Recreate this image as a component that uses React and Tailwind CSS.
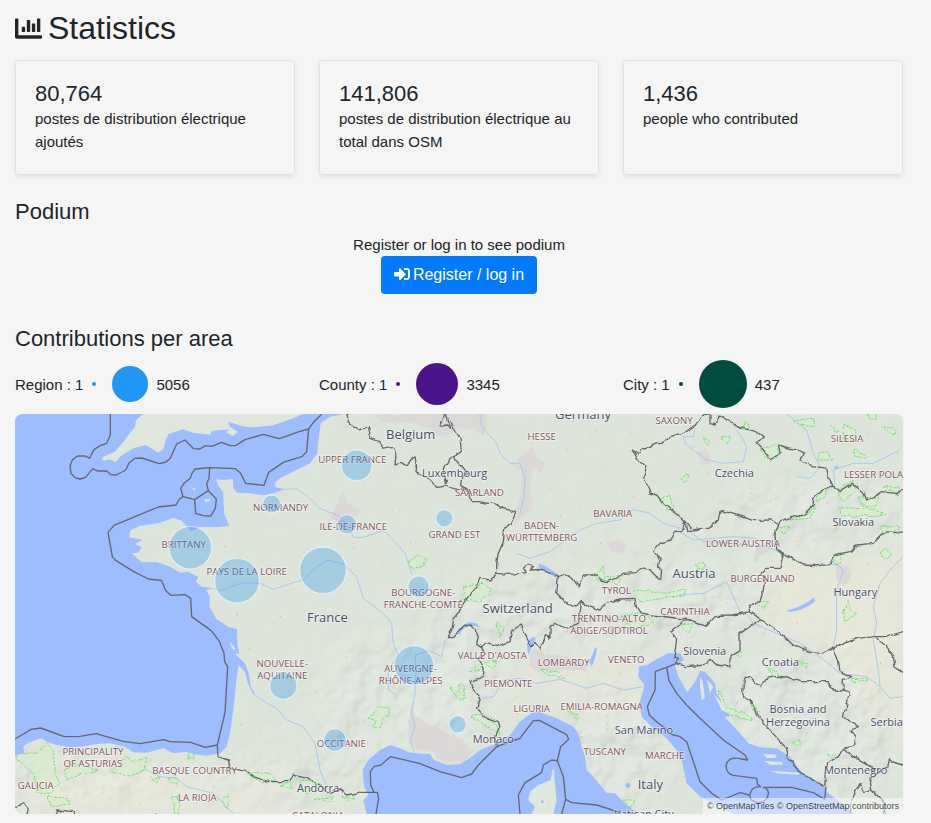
import React from 'react';
import { FaChartBar, FaSignInAlt } from 'react-icons/fa';

const STATS = [
  { value: '80,764', label: 'postes de distribution électrique ajoutés' },
  { value: '141,806', label: 'postes de distribution électrique au total dans OSM' },
  { value: '1,436', label: 'people who contributed' },
];

const AREAS = [
  { name: 'Region', min: 1, max: 5056, dot: 'bg-[#2196f3]', circle: 'bg-[#2196f3] size-9' },
  { name: 'County', min: 1, max: 3345, dot: 'bg-[#4a148c]', circle: 'bg-[#4a148c] size-[42px]' },
  { name: 'City', min: 1, max: 437, dot: 'bg-[#004d40]', circle: 'bg-[#004d40] size-12' },
];

// Map geometry: 3 units per pixel, y grows to the south
const SEAS = [
  // Atlantic and Channel
  'M45 12H1030L990 20 962 40 956 90 952 130 930 160 890 180 840 205 825 218 827 232 855 238 820 250 790 256 750 250 712 248 700 235 698 207 675 210 648 208 655 228 670 245 672 310 688 348 640 352 600 350 575 362 560 350 545 332 520 324 480 338 420 348 390 362 388 382 410 386 428 390 405 402 425 412 415 428 395 430 425 457 470 456 510 470 540 488 565 486 595 500 588 515 605 530 640 535 618 540 630 560 628 590 650 628 685 650 711 658 712 700 718 730 705 732 718 760 712 790 705 850 700 900 690 970 680 1010 660 1030 620 1037 580 1032 560 1025 520 1030 490 1015 440 1028 400 1027 375 1010 330 1000 290 1002 240 1010 210 1012 170 1005 140 995 125 985 85 998 70 1010 72 1028 45 1038Z',
  // Western Mediterranean
  'M1100 1212L1090 1170 1105 1155 1092 1130 1088 1080 1105 1050 1140 1020 1170 1005 1200 1015 1230 1028 1290 1032 1302 1050 1340 1065 1380 1062 1405 1048 1440 1020 1480 1005 1530 975 1560 935 1595 908 1615 905 1670 925 1720 950 1735 970 1745 1010 1755 1040 1760 1080 1780 1100 1820 1148 1845 1150 1870 1175 1900 1200 1910 1212Z',
  // Adriatic
  'M1980 742L2005 730 2040 730 2052 750 2025 765 2035 800 2062 847 2085 815 2100 783 2115 785 2145 820 2150 850 2170 890 2190 918 2175 922 2220 970 2245 1000 2280 1012 2330 1015 2370 1040 2390 1070 2410 1090 2470 1125 2480 1145 2540 1190 2560 1212H2200L2140 1180 2100 1160 2060 1120 2045 1050 2030 1020 1995 980 1955 950 1925 920 1918 880 1930 840 1933 825 1915 800 1917 768 1940 765Z',
];

const ISLANDS = [
  'M430 12L408 30 405 50 370 95 345 125 305 143 310 152 330 148 347 157 360 140 400 115 437 105 475 128 490 118 497 90 505 72 550 58 580 68 632 74 635 62 700 58 690 50 684 35 735 50 765 52 820 46 880 25 908 12Z',
  'M678 66L695 54 714 66 697 78Z',
  'M612 268L628 266 630 274 616 276Z',
  'M578 235h8v5h-8z',
  'M1658 1078L1652 1110 1615 1125 1590 1145 1585 1170 1605 1190 1595 1212H1660L1670 1170 1665 1120 1662 1080Z',
  'M2100 800L2108 815 2115 865 2105 870 2100 830Z',
  'M2120 808L2140 830 2130 850Z',
  'M2140 850L2165 880 2185 910 2165 900Z',
  'M2290 1032L2330 1034 2325 1044 2300 1044Z',
  'M2290 1052L2345 1056 2350 1064 2310 1064Z',
  'M2310 1082L2400 1088 2395 1094 2330 1090Z',
  'M690 695L706 715 700 722 692 705Z',
];

const LAKES = [
  'M1616 460L1640 470 1680 498 1665 502 1645 490 1618 473Z',
  'M2360 602L2395 590 2430 572 2440 562 2446 572 2430 586 2400 600 2370 606Z',
  'M1374 666L1382 650 1408 636 1430 640 1440 652 1425 648 1400 648 1385 662 1378 676Z',
  'M1580 700L1598 680 1608 684 1595 710 1585 735Z',
  'M1768 755L1785 715 1792 712 1785 745 1775 770Z',
  'M705 732L735 760 746 790 752 830 765 850 758 850 744 820 735 785 712 762Z',
  'M1878 1120L1888 1118 1892 1128 1884 1136 1876 1128Z',
  'M2502 170L2512 167 2516 173 2505 178Z',
  'M560 348L588 348 573 363Z',
];

const URBAN = [
  'M1030 238L1040 275 1070 290 1082 305 1060 330 1050 370 1010 340 990 320 1010 285Z',
  'M1120 12H1440V40L1410 60 1380 55 1330 85 1300 60 1240 40 1150 35Z',
  'M1380 12H1450L1465 50 1450 80 1420 50 1380 55Z',
  'M1600 105L1610 140 1640 165 1625 190 1600 175 1590 230 1598 300 1570 320 1540 350 1550 300 1565 250 1560 180 1535 165 1570 135Z',
  'M1825 400L1850 388 1875 400 1870 428 1830 425Z',
  'M2095 130L2110 115 2130 135 2125 160 2105 165Z',
  'M2510 465L2550 470 2555 500 2535 530 2510 510Z',
  'M2270 410L2300 400 2310 420 2280 440 2270 460 2262 445Z',
  'M1230 890L1250 920 1320 960 1390 990 1420 1030 1395 1055 1340 1055 1310 1045 1300 1025 1250 1020 1225 990Z',
  'M1590 720L1650 730 1720 745 1760 765 1760 785 1690 780 1620 790 1590 770Z',
];

const PLAINS = [
  'M2330 420L2420 470 2500 460 2600 440 2709 380V980L2640 960 2560 840 2500 740 2400 720 2310 650 2300 520Z',
  'M1480 840L1560 790 1700 790 1850 760 1930 820 1920 880 1800 880 1650 850 1500 880Z',
  'M60 1080L250 1090 420 1060 560 1100 750 1120 900 1160V1212H60Z',
];

const MOUNTAINS = [
  { cx: 1700, cy: 620, rx: 400, ry: 110 },
  { cx: 1370, cy: 800, rx: 130, ry: 220 },
  { cx: 2080, cy: 560, rx: 250, ry: 110 },
  { cx: 2440, cy: 320, rx: 290, ry: 100 },
  { cx: 2400, cy: 960, rx: 300, ry: 240 },
  { cx: 880, cy: 1110, rx: 330, ry: 70 },
  { cx: 250, cy: 1090, rx: 270, ry: 80 },
  { cx: 1120, cy: 850, rx: 170, ry: 170 },
  { cx: 1860, cy: 1000, rx: 180, ry: 170 },
];

const RIVERS = [
  'M855 238L890 236 925 260 960 296 1020 318 1045 350 1060 382 1090 382 1150 362 1170 380 1215 430 1235 490',
  'M640 535L665 542 690 530 730 518 780 520 820 538 880 518 910 510 950 470 985 450 1030 462 1070 500 1090 565 1130 595 1150 612 1175 640 1180 700 1195 735',
  'M1242 1025L1230 995 1245 950 1235 910 1245 850 1248 780 1245 735 1290 722 1325 740 1335 690 1375 665',
  'M1195 735L1165 780 1165 840 1190 855',
  'M758 850L800 880 830 895 860 930 910 950 945 1000 960 1080 980 1130',
  'M1440 12L1445 50 1490 100 1500 130 1530 160 1560 160 1575 200 1572 260 1560 310',
  'M1550 430L1590 445 1650 425 1700 390 1740 360 1790 340 1860 330 1900 298 1950 310 1990 340 2060 360 2110 395 2200 400 2300 410 2350 430',
  'M2350 430L2420 468 2510 462 2530 480 2510 540 2510 660 2500 710',
  'M2085 60L2080 80 2050 80 2055 100 2080 120 2120 150 2170 160 2230 155 2240 110 2225 80 2210 60',
  'M2360 12L2420 60 2440 130 2460 170 2430 205 2390 200',
  'M2505 225L2500 180 2560 160 2620 160 2700 120',
  'M2709 440L2670 480 2640 520 2620 590 2630 640 2620 690 2635 780 2640 830 2670 865 2709 860',
  'M2240 610L2260 640 2330 670 2400 700 2460 740 2520 790 2600 800 2640 830',
  'M1450 865L1480 860 1510 810 1560 805 1610 820 1680 808 1760 835 1810 820 1870 840 1930 830',
  'M440 1080L480 1100 530 1105 560 1130 640 1150 700 1212',
  'M2040 555L2110 550 2180 515 2200 560 2220 605',
  'M2030 360L2080 390 2200 380 2270 385',
];

const WATER_LIMITS = [
  'M331 12V75L320 100 300 107 281 120 269 145 256 138 232 138 217 150 210 167 213 190 225 203 240 207 257 202 278 176 292 183 320 183 333 194 349 195 377 180 388 158 405 145 425 144 478 161 498 156 511 145 530 102 555 90 581 116 600 117 616 107 635 109 665 97 690 107 707 107 735 89 790 73 838 86 900 64 926 57 938 40 965 12',
  'M926 57L920 125 905 140 850 157 806 187 792 226 737 220 722 190 706 176 629 173 585 177 576 190 571 205 552 220 542 235 549 260 584 269 625 242 620 222 627 205 629 173',
  'M549 260L538 267 528 285 475 291 342 346 324 367 337 440 348 452 400 484 445 507 484 511 498 543 513 556 555 554 572 565 575 620 634 662 658 694 672 730 674 755 683 770 675 908 652 1005 616 1012 572 997 510 995 491 989 421 1001 370 994 288 971 240 979 193 980 122 954 93 958 45 987',
  'M584 269L587 310 610 317 632 318 646 295 649 267 625 242',
  'M652 1005L654 1040',
  'M1078 1147H1122L1112 1125 1111 1085 1122 1070 1143 1065 1171 1040 1258 1060 1320 1085 1385 1103 1415 1092 1435 1065 1455 1045 1490 1010',
  'M1122 1147H1132L1136 1165 1128 1212',
  'M1490 1010L1545 990 1560 985 1600 932 1618 931 1700 974 1706 988 1682 1010 1672 1052 1690 1100 1697 1168 1685 1212',
  'M1672 1052L1655 1050 1630 1065 1625 1088 1575 1118 1555 1155 1560 1212',
  'M1697 1168L1715 1178 1790 1185 1860 1208',
  'M2030 760L2000 772 1966 784 1965 840 1942 890 1948 915 1975 940 1995 955 2010 972 2040 980 2060 995 2100 1115 2135 1150 2165 1170 2220 1148 2248 1155',
  'M2000 772L2007 812 2030 850 2060 885 2100 925 2170 990 2235 1035 2243 1050C2235 1052 2200 1035 2188 1050C2172 1062 2176 1090 2200 1096L2270 1105 2272 1122 2282 1130C2250 1128 2242 1160 2258 1172C2275 1184 2300 1176 2304 1155C2308 1145 2300 1132 2290 1132H2375L2440 1148 2474 1168 2478 1130',
];

const LAND_BORDERS = [
  'M1040 12L1046 40 1075 60 1105 52 1112 85 1140 95 1145 118 1180 112 1188 130 1185 165 1200 160 1220 170 1235 145 1245 140 1250 170 1248 185 1290 210 1310 232 1340 228 1365 240 1400 235 1410 265 1415 275 1440 275 1460 280 1480 280 1500 294 1548 304',
  'M1335 12L1320 50 1340 45 1352 55 1345 30 1340 15M1352 30L1365 60 1380 85 1384 120 1365 140 1350 145 1335 170 1330 190 1340 215 1335 230M1360 140L1380 165 1400 190 1385 205 1382 225 1395 240',
  'M1548 304L1530 345 1515 350 1510 395 1495 430 1490 460 1490 490 1475 510 1440 505 1430 530 1405 560 1390 580 1375 610 1360 630 1355 660 1345 680 1360 680 1390 650 1410 645 1425 660 1435 680 1430 700 1445 710 1455 735 1435 750 1455 785 1450 800 1410 815 1415 835 1440 860 1430 895 1450 920 1495 935 1500 950 1485 985 1490 1010',
  'M1490 490L1530 493 1560 490 1575 488 1570 475 1585 463 1600 470 1590 480 1625 478 1660 490 1675 500 1695 492 1720 508 1735 530 1750 495 1790 495 1800 510 1820 515 1850 505 1870 490 1905 488 1915 475 1950 480 1970 500 1982 508 1985 485 1975 470 1980 450 1958 425 1980 400 2010 390 2025 360 2045 365 2055 335',
  'M1675 500L1670 550 1700 580 1725 588 1745 575 1770 590 1800 600 1820 580 1860 570 1905 568 1910 590 1925 610 1980 618 2070 630 2120 648 2145 620 2180 618 2250 605 2245 590 2280 575 2290 540 2295 500 2280 492 2300 475 2340 475 2350 430 2330 415 2325 375 2335 345',
  'M1745 575L1740 610 1735 640 1700 655 1665 640 1650 650 1650 685 1640 670 1620 720 1605 700 1595 710 1575 670 1560 645 1540 660 1530 695 1490 710 1460 700 1445 710',
  'M2055 335L2035 315 1990 280 1970 255 1950 250 1930 200 1940 170 1910 145 1897 120 1915 135 1920 120 1980 98 2010 80 2050 68 2095 40 2110 12 2130 15 2130 40 2145 45 2160 15 2180 30 2230 55 2270 65 2290 80 2270 100 2290 120 2310 150 2340 130 2335 105 2390 120 2410 125 2400 150 2430 165 2480 175 2485 200 2500 230 2480 230 2455 250 2440 265 2440 285 2410 315 2360 325 2340 335 2335 345 2310 330 2260 332 2240 325 2160 300 2155 330 2130 355 2105 355 2080 360 2055 335 2060 365 2100 360',
  'M2500 230L2520 245 2560 220 2590 245 2600 270 2625 260 2640 245 2690 250 2709 240',
  'M2350 430L2375 445 2410 465 2450 467 2490 464 2500 435 2550 425 2570 405 2620 400 2655 365 2709 370',
  'M2250 605L2285 630 2330 660 2380 705 2430 728 2465 730 2500 715 2570 685 2625 680 2660 680 2709 665',
  'M2625 680L2660 710 2680 740 2685 770 2709 790',
  'M2285 630L2250 650 2220 670 2220 720 2190 740 2190 770 2150 765 2130 745 2120 765 2060 770 2030 760 2035 745 2022 740 2030 690 2015 665 2045 635 2070 630',
  'M2500 715L2515 750 2520 785 2555 800 2530 808 2528 840 2500 840 2485 815 2440 815 2400 815 2340 798 2300 805 2285 830 2265 815 2250 800 2235 803 2230 820 2228 860 2250 870 2270 910 2300 950 2360 1015 2365 1040 2400 1090 2440 1110 2475 1130',
  'M2528 840L2550 845 2530 920 2575 950 2550 960 2565 980 2560 1010 2530 1015 2515 1040 2480 1060 2475 1090 2475 1130',
  'M2530 1015L2560 1040 2600 1060 2630 1090 2610 1110 2615 1140 2590 1145 2580 1120 2555 1170 2550 1212M2630 1090L2660 1070 2665 1050 2709 1065M2615 1140L2650 1175 2655 1212',
  'M654 1040L685 1050 690 1075 740 1085 760 1100 805 1115 870 1115 880 1095 920 1105 960 1125 990 1150 1020 1140 1040 1155 1078 1147',
  'M45 1190L75 1180 85 1195 80 1212M165 1212L170 1200 220 1205 225 1212',
];

const PARKS = [
  'M105 1030L140 1002 160 1020 165 1090 180 1120 150 1150 115 1150 100 1090 50 1050 60 1030Z',
  'M340 1080L380 1040 400 1055 440 1045 435 1080 390 1098 335 1090Z',
  'M190 1080L240 1060 290 1080 240 1095 200 1110Z',
  'M515 1160L535 1160 540 1212 525 1212Z',
  'M455 1110L480 1100 470 1120Z',
  'M505 1100L535 1105 530 1120 505 1115Z',
  'M565 1028h14v18h-14z',
  'M665 1170L685 1155 688 1200Z',
  'M145 1160L200 1165 210 1185 150 1190Z',
  'M1225 455L1250 435 1280 445 1275 470 1235 475Z',
  'M1105 925L1140 890 1165 895 1165 920 1145 925 1140 955 1120 952 1125 930Z',
  'M1350 835L1375 845 1375 825 1392 825 1395 870 1375 870Z',
  'M740 1090L800 1085 830 1110 780 1115Z',
  'M840 1125L870 1120 880 1138Z',
  'M900 1110L960 1120 980 1140 920 1150Z',
  'M945 1165L1000 1160 990 1175Z',
  'M1025 1160L1065 1162 1050 1172Z',
  'M1395 530L1450 520 1475 540 1440 575 1390 570Z',
  'M1780 490L1810 475 1815 505 1790 510Z',
  'M1820 500L1870 495 1850 525Z',
  'M1900 540L1960 545 2000 550 2060 535 2050 555 1990 565 1920 575Z',
  'M2040 205L2070 190 2065 215 2045 222Z',
  'M1985 265L2010 260 2020 300 2000 300Z',
  'M2105 80L2130 90 2120 110Z',
  'M2160 85L2190 75 2185 100Z',
  'M2235 40L2250 50 2230 62Z',
  'M2280 120L2335 105 2330 145 2300 145Z',
  'M2380 30L2440 25 2440 50 2400 45Z',
  'M2490 45L2520 65 2510 70Z',
  'M2530 45L2570 60 2560 95 2530 85Z',
  'M2600 12h25l5 15h-20z',
  'M2640 50L2690 55 2680 75Z',
  'M2455 130L2480 125 2500 150 2455 150Z',
  'M2560 120L2600 135 2605 142 2565 140Z',
  'M2510 240L2560 215 2570 240 2530 275Z',
  'M2455 250L2485 235 2475 260 2450 275Z',
  'M2370 330L2420 310 2445 290 2430 325Z',
  'M2340 350L2365 350 2350 370Z',
  'M2515 295L2600 292 2655 310 2620 320 2530 318Z',
  'M2575 265L2640 260 2630 290 2590 285Z',
  'M2650 230L2700 230 2695 255Z',
  'M2640 350L2700 350 2690 365 2650 370Z',
  'M2640 425L2660 415 2675 435 2655 448Z',
  'M2500 435L2525 432 2520 460 2505 465Z',
  'M2085 465L2100 455 2118 468 2100 478Z',
  'M2270 575L2305 575 2290 595Z',
  'M2155 840L2180 890 2255 920 2255 935 2190 915 2160 890Z',
  'M2250 870L2275 905 2260 905Z',
  'M2375 1000L2400 990 2400 1008Z',
  'M2480 1035L2505 1032 2500 1042Z',
  'M1415 920L1450 910 1490 945 1500 975 1450 945Z',
  'M1860 620L1930 605 1960 635 1900 660Z',
  'M1830 650L1870 655 1840 680Z',
  'M2040 645L2080 640 2065 670Z',
  'M1410 785L1440 760 1445 785Z',
  'M1455 755L1490 750 1475 775Z',
  'M1490 640L1510 655 1500 680Z',
  'M1620 780L1670 785 1700 810 1640 790Z',
  'M1700 900L1735 915 1730 925Z',
  'M1870 1170L1905 1170 1895 1195Z',
  'M2190 735L2225 725 2220 740Z',
  'M2300 770L2360 805 2320 800Z',
  'M2395 755L2420 760 2420 775Z',
  'M2555 805L2603 805V812H2555Z',
  'M2530 600L2545 570 2550 600 2570 610 2535 635Z',
  'M1722 1103h26v7h-26z',
];

// x, y, lines
const REGIONS = [
  [1057, 160, ['UPPER FRANCE']],
  [842, 304, ['NORMANDY']],
  [1060, 361, ['ILE-DE-FRANCE']],
  [1363, 383, ['GRAND EST']],
  [551, 413, ['BRITTANY']],
  [740, 494, ['PAYS DE LA LOIRE']],
  [1270, 557, ['BOURGOGNE-', 'FRANCHE-COMTÉ']],
  [847, 771, ['NOUVELLE-', 'AQUITAINE']],
  [1232, 785, ['AUVERGNE-', 'RHÔNE-ALPES']],
  [1024, 1010, ['OCCITANIE']],
  [279, 1034, ['PRINCIPALITY', 'OF ASTURIAS']],
  [584, 1091, ['BASQUE COUNTRY']],
  [107, 1137, ['GALICIA']],
  [592, 1172, ['LA RIOJA']],
  [370, 1236, ['CASTILE AND LEÓN']],
  [954, 1228, ['CATALONIA']],
  [1438, 259, ['SAARLAND']],
  [1625, 89, ['HESSE']],
  [2022, 43, ['SAXONY']],
  [1838, 320, ['BAVARIA']],
  [1625, 358, ['BADEN-', 'WÜRTTEMBERG']],
  [1849, 552, ['TYROL']],
  [1827, 637, ['TRENTINO-ALTO', 'ADIGE/SÜDTIROL']],
  [1477, 747, ["VALLE D'AOSTA"]],
  [1691, 768, ['LOMBARDY']],
  [1879, 758, ['VENETO']],
  [1525, 832, ['PIEMONTE']],
  [1595, 906, ['LIGURIA']],
  [1805, 901, ['EMILIA-ROMAGNA']],
  [1814, 1034, ['TUSCANY']],
  [1994, 1048, ['MARCHE']],
  [2055, 614, ['CARINTHIA']],
  [2229, 411, ['LOWER AUSTRIA']],
  [2288, 516, ['BURGENLAND']],
  [2541, 95, ['SILESIA']],
  [2642, 204, ['LESSER POLAND']],
];

const COUNTRIES = [
  [1232, 86, ['Belgium'], 'text-[39px]'],
  [1749, 26, ['Germany'], 'text-[39px]'],
  [982, 636, ['France'], 'text-[39px]'],
  [1553, 609, ['Switzerland'], 'text-[39px]'],
  [2082, 505, ['Austria'], 'text-[39px]'],
  [1951, 1136, ['Italy'], 'text-[39px]'],
  [1364, 200, ['Luxembourg'], 'text-[33px]'],
  [2203, 200, ['Czechia'], 'text-[33px]'],
  [2560, 348, ['Slovakia'], 'text-[33px]'],
  [2566, 558, ['Hungary'], 'text-[33px]'],
  [2114, 736, ['Slovenia'], 'text-[33px]'],
  [2341, 768, ['Croatia'], 'text-[33px]'],
  [2394, 908, ['Bosnia and', 'Herzegovina'], 'text-[33px]'],
  [2660, 947, ['Serbia'], 'text-[33px]'],
  [2567, 1092, ['Montenegro'], 'text-[33px]'],
  [1480, 999, ['Monaco'], 'text-[33px]'],
  [1932, 973, ['San Marino'], 'text-[33px]'],
  [954, 1146, ['Andorra'], 'text-[33px]'],
  [1932, 1224, ['Vatican City'], 'text-[33px]'],
];

const CONTRIBUTIONS = [
  { x: 1070, y: 166, r: 46 },
  { x: 815, y: 282, r: 27 },
  { x: 1041, y: 343, r: 29 },
  { x: 1333, y: 325, r: 26 },
  { x: 571, y: 413, r: 64 },
  { x: 711, y: 512, r: 67 },
  { x: 969, y: 481, r: 70 },
  { x: 1256, y: 530, r: 32 },
  { x: 850, y: 827, r: 41 },
  { x: 1242, y: 766, r: 59 },
  { x: 1373, y: 943, r: 26 },
  { x: 1005, y: 990, r: 34 },
  { x: 1627, y: 1175, r: 7 },
];

const TOWNS = 'M522 24h3M498 64h3M672 410h3M710 612h3M710 614h3M745 715h3M1005 312h3M1015 320h3M1025 318h3M1012 328h3M1022 332h3M1060 400h3M1060 413h3M1197 300h3M782 457h3M840 620h3M1145 465h3M1230 398h3M815 640h3M945 845h3M1040 740h3M880 760h3M780 970h3M1090 930h3M1320 600h3M1590 150h3M1597 220h3M1575 185h3M1770 75h3M1775 90h3M1785 62h3M1700 120h3M1720 30h3M1890 70h3M1650 240h3M1680 320h3M1740 300h3M1870 255h3M1900 260h3M1720 430h3M1960 460h3M1800 400h3M2080 110h3M2120 190h3M2250 250h3M2310 275h3M2380 235h3M2390 395h3M2440 390h3M2135 265h3M2270 420h3M2330 360h3M2410 60h3M2600 70h3M2690 130h3M2480 280h3M2645 440h3M2600 460h3M2180 580h3M2140 560h3M2200 500h3M2640 760h3M2635 840h3M2610 880h3M2390 640h3M2290 670h3M2210 880h3M2340 930h3M2420 970h3M1820 920h3M1820 940h3M1820 960h3M1742 980h3M1745 1000h3M1750 1020h3M1535 920h3M1550 910h3M1840 1050h3M1900 1090h3M1980 1160h3M2050 1100h3M2060 1170h3M1550 860h3M1650 820h3M1760 800h3M1860 790h3M75 1020h3M78 1030h3M270 1155h3M310 1130h3M305 1150h3M395 1155h3M450 1100h3M420 1180h3M620 1070h3M640 1130h3M720 945h3M1230 1180h3M780 1170h3M1400 950h3M1480 800h3';

function MapLabels({ x, y, lines, lineHeight, className }) {
  return (
    <text x={x} y={y} textAnchor="middle" className={className}>
      {lines.map((line, i) => (
        <tspan key={line} x={x} dy={i === 0 ? 0 : lineHeight}>
          {line}
        </tspan>
      ))}
    </text>
  );
}

function ContributionMap() {
  return (
    <div className="relative h-[400px] overflow-hidden rounded-lg bg-[#dde5da]">
      <svg
        viewBox="45 12 2664 1200"
        preserveAspectRatio="xMidYMid slice"
        className="block h-full w-full"
        role="img"
        aria-label="Contributions per area"
      >
        <defs>
          <filter id="soften" x="-30%" y="-30%" width="160%" height="160%">
            <feGaussianBlur stdDeviation="45" />
          </filter>
          <filter id="relief" x="0" y="0" width="100%" height="100%">
            <feTurbulence type="fractalNoise" baseFrequency="0.011" numOctaves="3" seed="11" />
            <feDiffuseLighting surfaceScale="26" lightingColor="#ffffff">
              <feDistantLight azimuth="225" elevation="55" />
            </feDiffuseLighting>
            <feColorMatrix type="saturate" values="0" />
          </filter>
          {/* breaks straight segments into a ragged line */}
          <filter id="ragged" filterUnits="userSpaceOnUse" x="45" y="12" width="2664" height="1200">
            <feTurbulence type="fractalNoise" baseFrequency="0.04" numOctaves="2" seed="3" result="noise" />
            <feDisplacementMap in="SourceGraphic" in2="noise" scale="15" xChannelSelector="R" yChannelSelector="G" />
          </filter>
          <mask id="ranges">
            <rect x="45" y="12" width="2664" height="1200" fill="#222" />
            <g fill="#ddd" filter="url(#soften)">
              {MOUNTAINS.map((m) => (
                <ellipse key={`${m.cx}-${m.cy}`} {...m} />
              ))}
            </g>
          </mask>
        </defs>

        <rect x="45" y="12" width="2664" height="1200" fill="#dde5da" />
        <g fill="#e7e8d9" filter="url(#soften)">
          {PLAINS.map((d) => <path key={d} d={d} />)}
        </g>
        <g mask="url(#ranges)">
          <rect x="45" y="12" width="2664" height="1200" filter="url(#relief)" opacity="0.22" />
        </g>
        <g fill="#dbd5d7" opacity="0.8" filter="url(#ragged)">
          {URBAN.map((d) => <path key={d} d={d} />)}
        </g>
        <g
          fill="#d5ecc9"
          fillOpacity="0.6"
          stroke="#6fe06f"
          strokeWidth="3"
          strokeDasharray="7 3"
          filter="url(#ragged)"
        >
          {PARKS.map((d) => <path key={d} d={d} />)}
        </g>
        <g fill="none" stroke="#a9c9ec" strokeWidth="3" strokeLinejoin="round">
          {RIVERS.map((d) => <path key={d} d={d} />)}
        </g>
        <path d={TOWNS} stroke="#f5a35c" strokeWidth="3" />
        <g fill="#9ebdff">
          {SEAS.map((d) => <path key={d} d={d} />)}
        </g>
        <g fill="#dfe6dc">
          {ISLANDS.map((d) => <path key={d} d={d} />)}
        </g>
        <g fill="#9ebdff">
          {LAKES.map((d) => <path key={d} d={d} />)}
        </g>
        <g fill="none" stroke="#66676b" strokeLinejoin="round">
          <g strokeWidth="4">
            {WATER_LIMITS.map((d) => <path key={d} d={d} />)}
          </g>
          <g strokeWidth="4" filter="url(#ragged)">
            {LAND_BORDERS.map((d) => <path key={d} d={d} />)}
          </g>
        </g>

        <g
          className="font-['Open_Sans','Noto_Sans',sans-serif]"
          stroke="#ffffff"
          strokeOpacity="0.5"
          strokeWidth="5"
          strokeLinejoin="round"
          paintOrder="stroke"
        >
          {REGIONS.map(([x, y, lines]) => (
            <MapLabels key={lines[0]} x={x} y={y} lines={lines} lineHeight={36} className="fill-[#84525d] text-[29px]" />
          ))}
          {COUNTRIES.map(([x, y, lines, size]) => (
            <MapLabels key={lines[0]} x={x} y={y} lines={lines} lineHeight={39} className={`fill-[#4b4b66] ${size}`} />
          ))}
        </g>

        <g fill="#2196f3" fillOpacity="0.3" stroke="#ffffff" strokeOpacity="0.5" strokeWidth="4">
          {CONTRIBUTIONS.map(({ x, y, r }) => (
            <circle key={`${x}-${y}`} cx={x} cy={y} r={r} />
          ))}
        </g>
      </svg>

      <div className="absolute right-0 bottom-0 bg-white/50 px-1 text-[9px] leading-4 text-black/75">
        <a href="#openmaptiles">© OpenMapTiles</a> <a href="#openstreetmap">© OpenStreetMap contributors</a>
      </div>
    </div>
  );
}

export default function App() {
  return (
    <div className="min-h-screen bg-[#f5f5f5] pt-2 pr-7 pb-2 pl-[15px] font-['Liberation_Sans',Arial,sans-serif] text-[15px] leading-[23px] text-[#212529]">
      <h1 className="mb-3 flex items-center gap-1.5 text-[32px] leading-10">
        <FaChartBar className="size-[27px]" />
        Statistics
      </h1>

      <div className="grid grid-cols-3 gap-6">
        {STATS.map((stat) => (
          <div key={stat.value} className="min-h-[115px] rounded border border-[#dee2e6] px-[19px] py-5 shadow-[0_2px_4px_rgba(0,0,0,0.075)]">
            <div className="text-[22px] leading-[26px]">{stat.value}</div>
            <div>{stat.label}</div>
          </div>
        ))}
      </div>

      <h2 className="mt-6 mb-2 text-[22px] leading-[26px]">Podium</h2>
      <div className="flex flex-col items-center">
        <p>Register or log in to see podium</p>
        <button
          type="button"
          className="flex h-[38px] items-center gap-[3px] rounded bg-[#007bff] px-[13px] pb-0.5 text-[16px] text-white"
        >
          <FaSignInAlt className="size-4" />
          Register / log in
        </button>
      </div>

      <h2 className="mt-8 mb-2 text-[22px] leading-[26px]">Contributions per area</h2>
      <div className="mb-1.5 grid grid-cols-3 gap-6">
        {AREAS.map((area) => (
          <div key={area.name} className="flex h-12 items-center">
            <span>{area.name} : {area.min}</span>
            <span className={`ml-[9px] size-1 rounded-full ${area.dot}`} />
            <span className={`mr-2 ml-4 rounded-full ${area.circle}`} />
            <span>{area.max}</span>
          </div>
        ))}
      </div>

      <ContributionMap />
    </div>
  );
}
